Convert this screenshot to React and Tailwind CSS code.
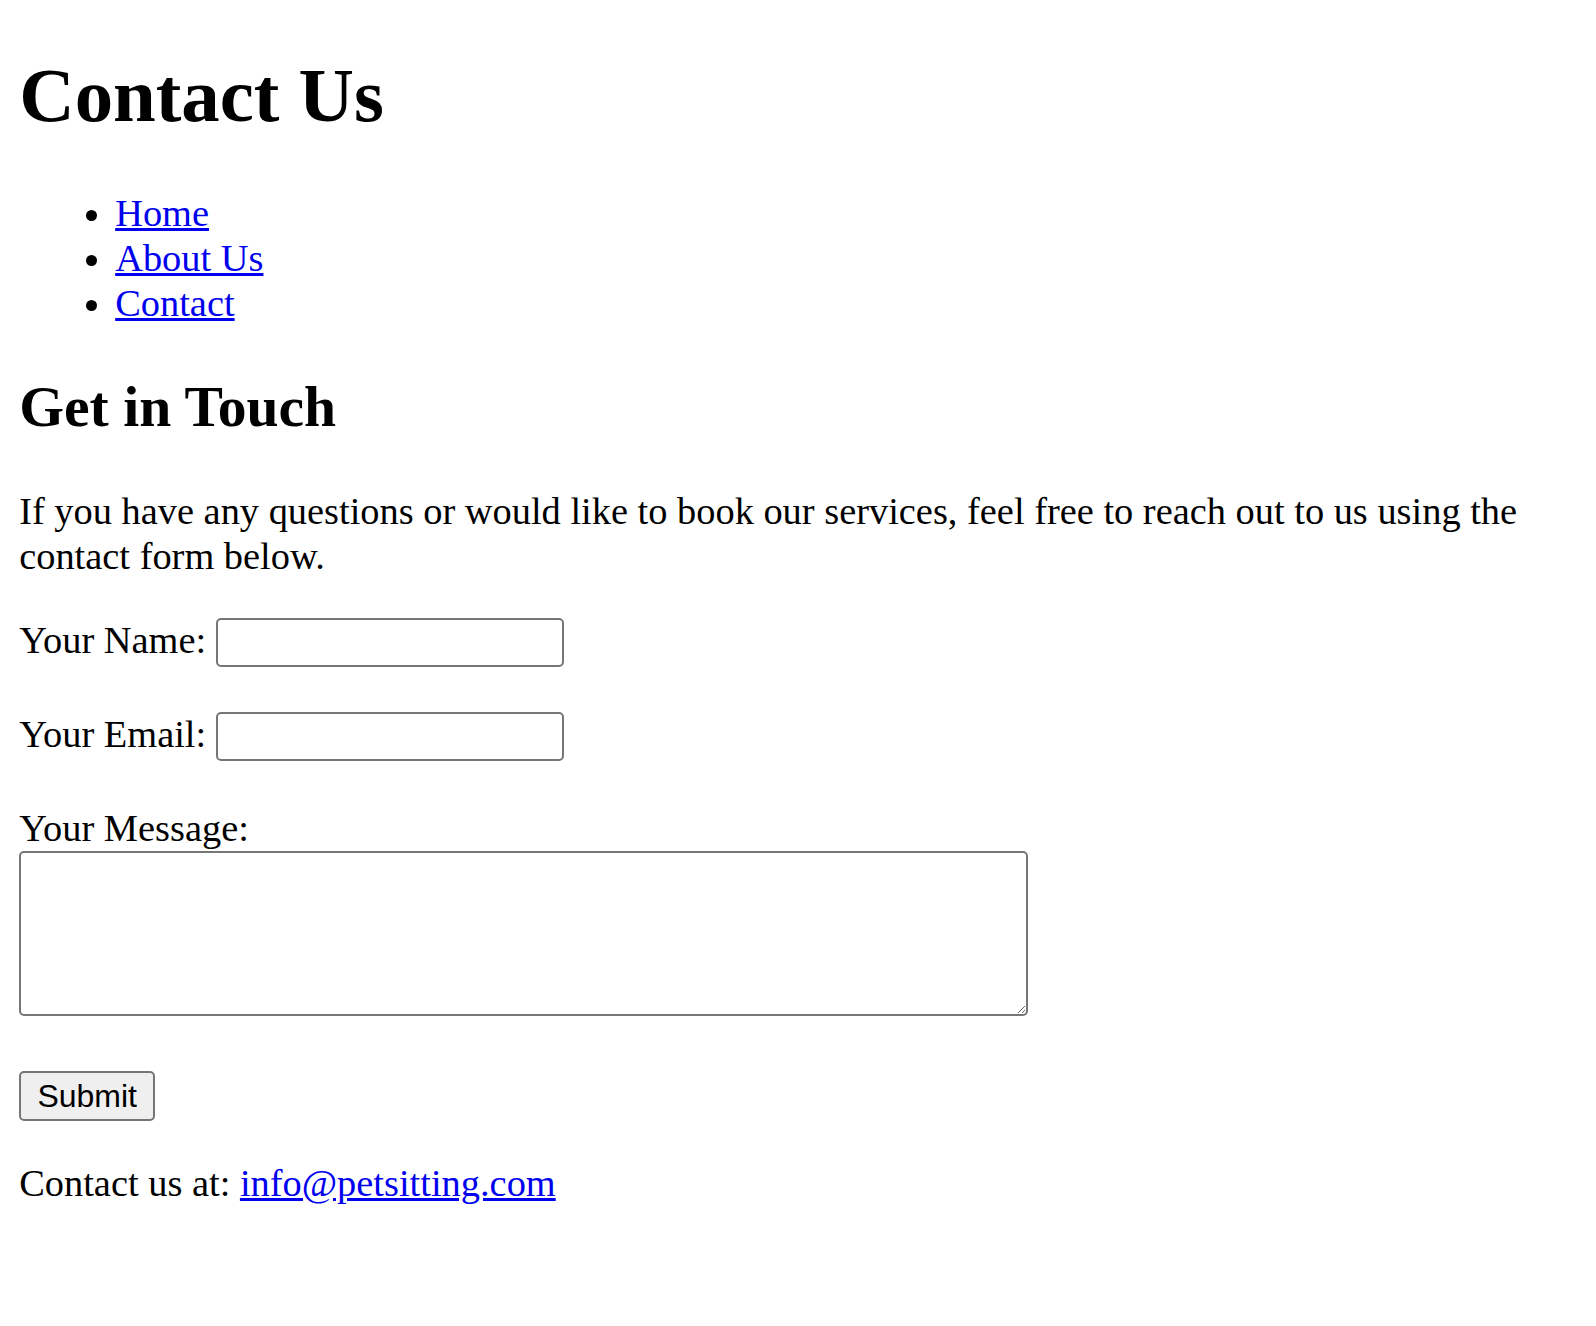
import React, { useState } from 'react';

export default function App() {
  const [name, setName] = useState('');
  const [email, setEmail] = useState('');
  const [message, setMessage] = useState('');

  const handleSubmit = (e) => {
    e.preventDefault();
  };

  return (
    <div className="min-h-screen bg-white px-[19.2px] pt-[51.5px] pb-[40px] font-['Liberation_Serif','Times_New_Roman',serif] text-[38.4px] leading-[1.17] text-black">
      <h1 className="text-[76.8px] font-bold leading-[normal]">Contact Us</h1>

      <ul className="mt-[51.5px] list-disc pl-[96px]">
        <li><a href="#" className="text-[#0000ee] underline">Home</a></li>
        <li><a href="#" className="text-[#0000ee] underline">About Us</a></li>
        <li><a href="#" className="text-[#0000ee] underline">Contact</a></li>
      </ul>

      <h2 className="mt-[48.5px] text-[57.6px] font-bold leading-[normal]">Get in Touch</h2>

      <p className="mt-[50px]">
        If you have any questions or would like to book our services, feel free to reach out to us using the contact form below.
      </p>

      <form className="mt-[39px]" onSubmit={handleSubmit}>
        <label htmlFor="name">Your Name:</label>{' '}
        <input
          id="name"
          type="text"
          value={name}
          onChange={(e) => setName(e.target.value)}
          className="inline-block h-[49px] w-[348px] rounded-[5px] border-2 border-[#767676] bg-white px-[4.8px] align-baseline font-['Liberation_Sans',Arial,sans-serif] text-[32px]"
        />
        <br />
        <br />
        <label htmlFor="email">Your Email:</label>{' '}
        <input
          id="email"
          type="email"
          value={email}
          onChange={(e) => setEmail(e.target.value)}
          className="inline-block h-[49px] w-[348px] rounded-[5px] border-2 border-[#767676] bg-white px-[4.8px] align-baseline font-['Liberation_Sans',Arial,sans-serif] text-[32px]"
        />
        <br />
        <br />
        <label htmlFor="message">Your Message:</label>
        <br />
        <textarea
          id="message"
          value={message}
          onChange={(e) => setMessage(e.target.value)}
          className="inline-block h-[165px] w-[1009px] resize rounded-[5px] border-2 border-[#767676] bg-white p-[4.8px] align-baseline font-['Liberation_Mono',monospace] text-[32px]"
        />
        <br />
        <br />
        <button
          type="submit"
          className="inline-block h-[50px] w-[136px] rounded-[5px] border-2 border-[#767676] bg-[#efefef] align-baseline font-['Liberation_Sans',Arial,sans-serif] text-[32px] leading-none text-black"
        >
          Submit
        </button>
      </form>

      <p className="mt-[40px]">
        Contact us at: <a href="mailto:info@petsitting.com" className="text-[#0000ee] underline">info@petsitting.com</a>
      </p>
    </div>
  );
}
